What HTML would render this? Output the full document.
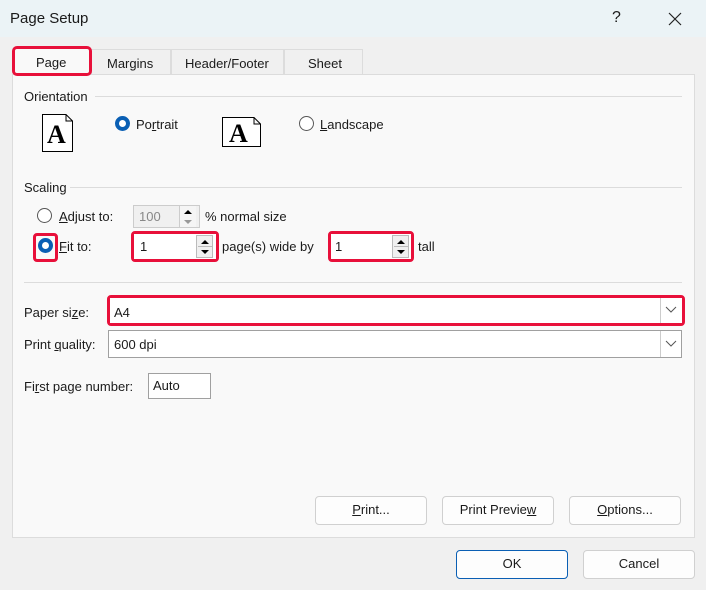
<!DOCTYPE html>
<html><head><style>
*{box-sizing:border-box;margin:0;padding:0}
body{width:706px;height:590px;background:#f0f0f0;font-family:"Liberation Sans",sans-serif;font-size:13px;color:#1a1a1a;position:relative;overflow:hidden}
.a{position:absolute}
.t{position:absolute;white-space:nowrap;line-height:16px}
.red{position:absolute;border:3px solid #e8103a;border-radius:4px}
.inp{position:absolute;background:#fff;border:1px solid #a0a0a0}
.rad{position:absolute;width:15px;height:15px;border-radius:50%;border:1px solid #555;background:#fff}
.rad.on{border:4px solid #0a5fb4}
.btn{position:absolute;background:#fdfdfd;border:1px solid #d0d0d0;border-radius:4px;text-align:center;line-height:26px}
.spin{position:absolute;width:17px;border-left:1px solid #ccc;background:#f0f0f0}
.line{position:absolute;height:1px;background:#dcdcdc}
u{text-decoration:underline}
</style></head><body>
<div class="a" style="left:0;top:0;width:706px;height:37px;background:#ebf3f6"></div>
<div class="t" style="left:10px;top:11px;font-size:15px">Page Setup</div>
<div class="t" style="left:612px;top:10px;font-size:16px">?</div>
<svg class="a" style="left:668px;top:12px" width="14" height="14"><path d="M1 1L13 13M13 1L1 13" stroke="#222" stroke-width="1.2"/></svg>

<div class="a" style="left:12px;top:74px;width:683px;height:464px;background:#f9f9f9;border:1px solid #dcdcdc"></div>
<div class="a" style="left:91px;top:49px;width:80px;height:26px;background:#f0f0f0;border:1px solid #dcdcdc"></div>
<div class="a" style="left:171px;top:49px;width:113px;height:26px;background:#f0f0f0;border:1px solid #dcdcdc"></div>
<div class="a" style="left:284px;top:49px;width:79px;height:26px;background:#f0f0f0;border:1px solid #dcdcdc"></div>
<div class="a" style="left:14px;top:48px;width:76px;height:28px;background:#f9f9f9"></div>
<div class="red" style="left:12px;top:46px;width:80px;height:30px;border-radius:5px"></div>
<div class="t" style="left:36px;top:55px">Page</div>
<div class="t" style="left:107px;top:56px">Margins</div>
<div class="t" style="left:185px;top:56px">Header/Footer</div>
<div class="t" style="left:308px;top:56px">Sheet</div>

<div class="t" style="left:24px;top:89px">Orientation</div>
<div class="line" style="left:95px;top:96px;width:587px"></div>
<svg class="a" style="left:41px;top:113px" width="34" height="40"><path d="M1.5 1.5H25L31.5 8V38.5H1.5Z M25 1.5V8H31.5" fill="#fff" stroke="#000"/><text x="6" y="30" font-family="Liberation Serif" font-weight="bold" font-size="26">A</text></svg>
<div class="rad on" style="left:115px;top:116px"></div>
<div class="t" style="left:136px;top:117px">Po<u>r</u>trait</div>
<svg class="a" style="left:221px;top:116px" width="42" height="32"><path d="M1.5 1.5H33L39.5 8V30.5H1.5Z M33 1.5V8H39.5" fill="#fff" stroke="#000"/><text x="8" y="26" font-family="Liberation Serif" font-weight="bold" font-size="26">A</text></svg>
<div class="rad" style="left:299px;top:116px"></div>
<div class="t" style="left:320px;top:117px"><u>L</u>andscape</div>

<div class="t" style="left:24px;top:180px">Scaling</div>
<div class="line" style="left:70px;top:187px;width:612px"></div>
<div class="rad" style="left:37px;top:208px"></div>
<div class="t" style="left:59px;top:209px"><u>A</u>djust to:</div>
<div class="inp" style="left:133px;top:205px;width:67px;height:23px;background:#f0f0f0;border-color:#ccc"></div>
<div class="t" style="left:139px;top:209px;color:#888">100</div>
<div class="spin" style="left:179px;top:206px;height:21px;background:#f5f5f5"></div>
<svg class="a" style="left:181px;top:206px" width="14" height="21"><path d="M3 8L7 4L11 8Z" fill="#000"/><path d="M3 14L7 18L11 14Z" fill="#999"/></svg>
<div class="t" style="left:205px;top:209px">% normal size</div>

<div class="red" style="left:33px;top:233px;width:25px;height:29px"></div>
<div class="rad on" style="left:38px;top:238px"></div>
<div class="t" style="left:59px;top:239px"><u>F</u>it to:</div>
<div class="red" style="left:131px;top:231px;width:88px;height:31px"></div>
<div class="inp" style="left:134px;top:234px;width:82px;height:25px;border:none"></div>
<div class="t" style="left:140px;top:239px">1</div>
<div class="spin" style="left:196px;top:235px;height:23px;border:1px solid #bbb"></div>
<svg class="a" style="left:198px;top:235px" width="14" height="23"><path d="M3 9L7 5L11 9Z" fill="#000"/><path d="M3 15L7 19L11 15Z" fill="#000"/><path d="M0 11.5H14" stroke="#bbb"/></svg>
<div class="t" style="left:222px;top:239px">page(s) wide by</div>
<div class="red" style="left:328px;top:231px;width:86px;height:31px"></div>
<div class="inp" style="left:331px;top:234px;width:80px;height:25px;border:none"></div>
<div class="t" style="left:335px;top:239px">1</div>
<div class="spin" style="left:392px;top:235px;height:23px;border:1px solid #bbb"></div>
<svg class="a" style="left:394px;top:235px" width="14" height="23"><path d="M3 9L7 5L11 9Z" fill="#000"/><path d="M3 15L7 19L11 15Z" fill="#000"/><path d="M0 11.5H14" stroke="#bbb"/></svg>
<div class="t" style="left:418px;top:239px">tall</div>

<div class="line" style="left:24px;top:282px;width:658px"></div>

<div class="t" style="left:24px;top:305px">Paper si<u>z</u>e:</div>
<div class="red" style="left:107px;top:295px;width:578px;height:31px"></div>
<div class="inp" style="left:110px;top:298px;width:572px;height:25px;border:none"></div>
<div class="a" style="left:660px;top:298px;width:1px;height:25px;background:#ccc"></div>
<svg class="a" style="left:665px;top:306px" width="12" height="8"><path d="M1 1L6 6L11 1" fill="none" stroke="#555"/></svg>
<div class="t" style="left:114px;top:305px">A4</div>

<div class="t" style="left:24px;top:337px">Print <u>q</u>uality:</div>
<div class="inp" style="left:108px;top:330px;width:574px;height:28px"></div>
<div class="a" style="left:660px;top:331px;width:1px;height:26px;background:#ccc"></div>
<svg class="a" style="left:665px;top:340px" width="12" height="8"><path d="M1 1L6 6L11 1" fill="none" stroke="#555"/></svg>
<div class="t" style="left:114px;top:337px">600 dpi</div>

<div class="t" style="left:24px;top:379px">Fi<u>r</u>st page number:</div>
<div class="inp" style="left:148px;top:373px;width:63px;height:26px"></div>
<div class="t" style="left:153px;top:378px">Auto</div>

<div class="btn" style="left:315px;top:496px;width:112px;height:29px"><u>P</u>rint...</div>
<div class="btn" style="left:442px;top:496px;width:112px;height:29px">Print Previe<u>w</u></div>
<div class="btn" style="left:569px;top:496px;width:112px;height:29px"><u>O</u>ptions...</div>
<div class="btn" style="left:456px;top:550px;width:112px;height:29px;border-color:#0a5fb4">OK</div>
<div class="btn" style="left:583px;top:550px;width:112px;height:29px">Cancel</div>
</body></html>
